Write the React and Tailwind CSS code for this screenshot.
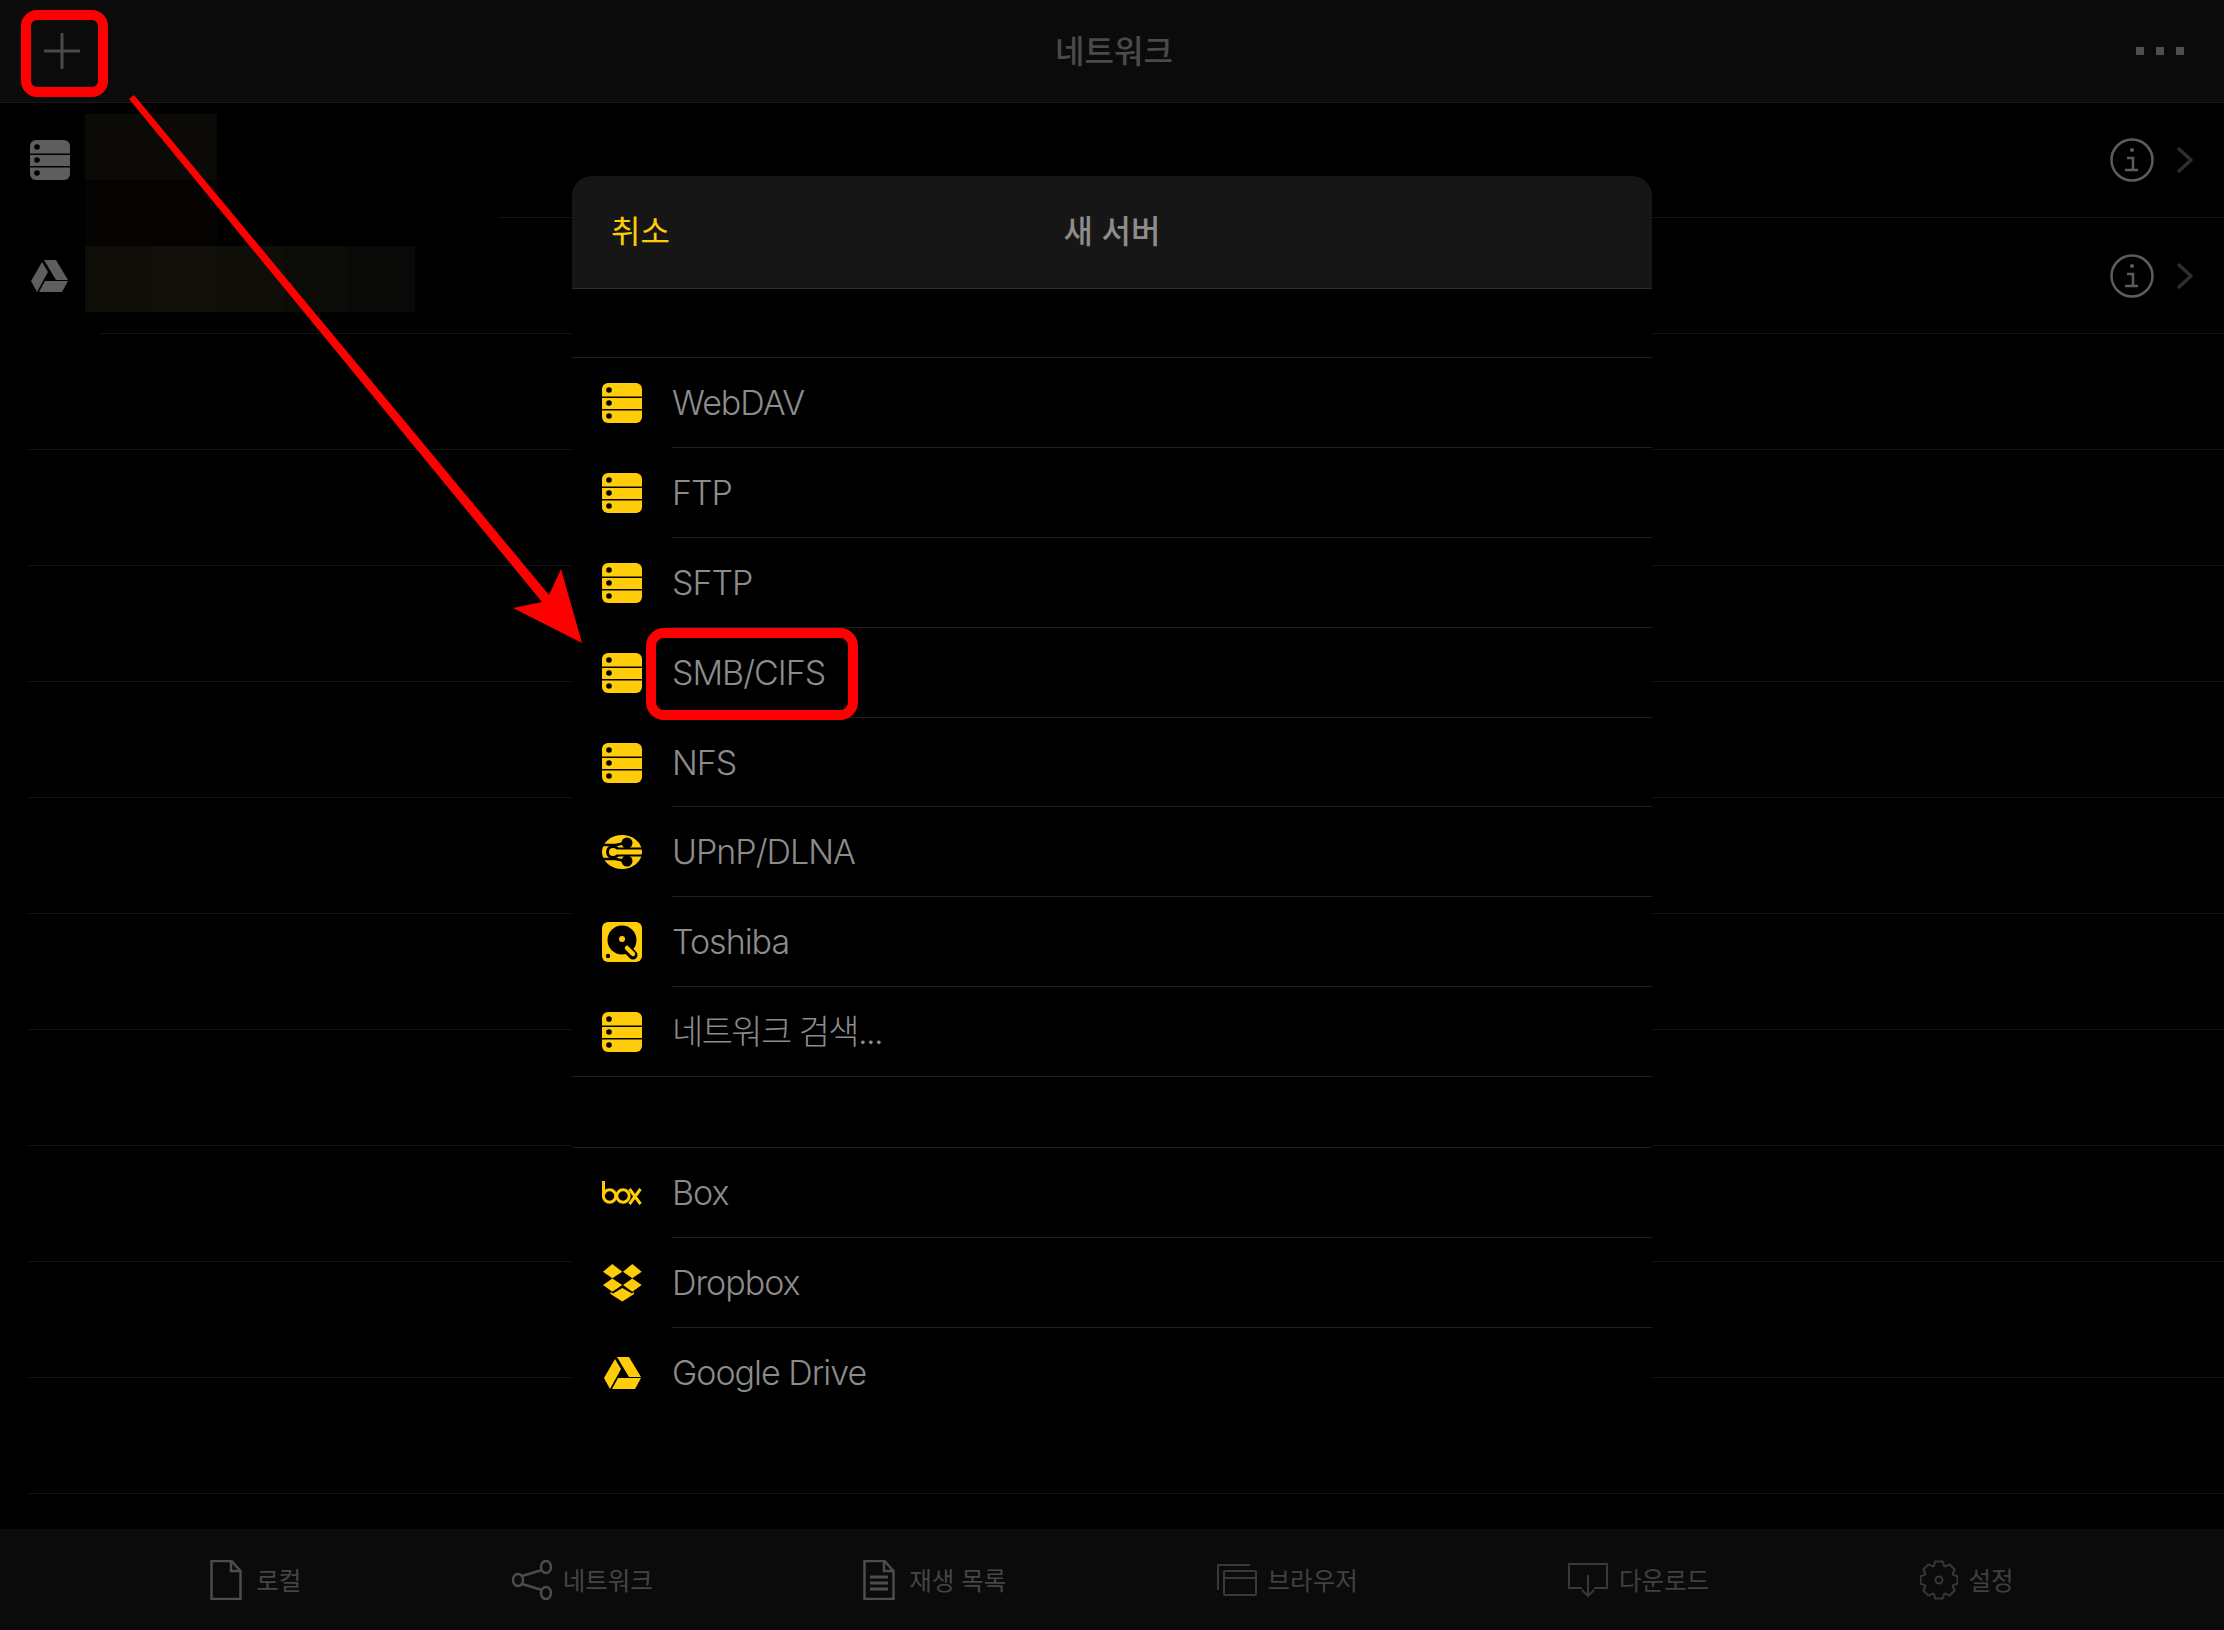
const Server = ({ c = "#ffcc0a" }) => (
  <svg width="40" height="40" viewBox="0 0 40 40">
    <path d="M6 0h28a6 6 0 0 1 6 6v7.500H0V6a6 6 0 0 1 6-6z" fill={c} />
    <rect y="15" width="40" height="11" fill={c} />
    <path d="M0 27.500h40V34a6 6 0 0 1-6 6H6a6 6 0 0 1-6-6z" fill={c} />
    <circle cx="7" cy="7" r="2.800" fill="#000" />
    <circle cx="7" cy="20" r="2.800" fill="#000" />
    <circle cx="7" cy="33" r="2.800" fill="#000" />
  </svg>
);
const Upnp = () => (
  <svg width="40" height="34" viewBox="0 0 40 34">
    <ellipse cx="20" cy="17" rx="20" ry="17" fill="#ffcc0a" />
    <path d="M1 10H13C17 10 18 8 25 8" stroke="#000" strokeWidth="2.500" fill="none" />
    <path d="M1 24H13C17 24 18 26 25 26" stroke="#000" strokeWidth="2.500" fill="none" />
    <circle cx="25" cy="8" r="5.500" fill="#000" />
    <circle cx="25" cy="26" r="5.500" fill="#000" />
    <path d="M14 13.500H40M14 20.500H40" stroke="#000" strokeWidth="2" fill="none" />
    <circle cx="11" cy="17" r="5.500" fill="#ffcc0a" stroke="#000" strokeWidth="3" />
    <rect x="12" y="14.500" width="6" height="5" fill="#ffcc0a" />
  </svg>
);
const Hdd = () => (
  <svg width="40" height="40" viewBox="0 0 40 40">
    <rect width="40" height="40" rx="6" fill="#ffcc0a" />
    <circle cx="20" cy="18" r="14.500" fill="#000" />
    <circle cx="20" cy="17" r="3" fill="#ffcc0a" />
    <path d="M24 26l7 7" stroke="#000" strokeWidth="9" strokeLinecap="round" />
    <path d="M25 26l6 6" stroke="#ffcc0a" strokeWidth="4.500" strokeLinecap="round" />
    <circle cx="6" cy="34" r="2.200" fill="#000" />
  </svg>
);
const BoxLogo = () => (
  <svg width="40" height="24" viewBox="0 0 40 24" fill="none" stroke="#ffcc0a" strokeWidth="3">
    <path d="M1.500 0v15" />
    <circle cx="7.600" cy="15" r="6.200" />
    <circle cx="21" cy="15" r="6.200" />
    <path d="M27.500 8l11 15M38.500 8l-11 15" />
  </svg>
);
const Dropbox = () => (
  <svg width="39" height="38" viewBox="0 0 39 38" fill="#ffcc0a">
    <path d="M0 7.700L9.300 0l10 7.700-10 6.600z" />
    <path d="M20 7.700L29.300 0l9.400 7.700-9.400 6.600z" />
    <path d="M0 21l9.300-6.500 10 6.500-10 6.700z" />
    <path d="M20 21l9.300-6.500 9.400 6.500-9.400 6.700z" />
    <path d="M7.500 28l2.500 1.500 9.300-5.500L29 29.500l2-1.500v2l-11.700 7.500L7.500 30z" />
  </svg>
);
const Drive = ({ c = "#ffcc0a", w = 37, h = 32 }) => (
  <svg width={w} height={h} viewBox="0 0 37 32" fill={c}>
    <path d="M13 0h12l12 20H25z" />
    <path d="M11 2l6 10L6 32 0 21z" />
    <path d="M14 21h23l-6 11H8z" />
  </svg>
);
const Plain = ({ children, w = 40, h = 40, s = "#4c4c4c", sw = 2 }) => (
  <svg width={w} height={h} viewBox={`0 0 ${w} ${h}`} fill="none" stroke={s} strokeWidth={sw}>
    {children}
  </svg>
);
const gearPath = () => {
  const pts = [];
  const n = 8;
  for (let i = 0; i < n; i++) {
    const a = (i * 2 * Math.PI) / n - Math.PI / 2;
    const seg = (2 * Math.PI) / n;
    [[15, -0.5], [18.8, -0.27], [18.8, 0.27], [15, 0.5]].forEach(([r, k]) => {
      const t = a + k * seg * 0.9;
      pts.push(`${(19 + r * Math.cos(t)).toFixed(1)} ${(20 + r * Math.sin(t)).toFixed(1)}`);
    });
  }
  return "M" + pts.join("L") + "z";
};
const Info = () => (
  <svg width="44" height="44" viewBox="0 0 44 44" fill="none" stroke="#5c5c5c" strokeWidth="2.500">
    <circle cx="22" cy="22" r="20.500" />
    <circle cx="22" cy="12" r="2" fill="#5c5c5c" stroke="none" />
    <path d="M17 20h6v12M15 32h13" />
  </svg>
);
const Chevron = () => (
  <svg width="16" height="26" viewBox="0 0 16 26" fill="none" stroke="#2e2e2e" strokeWidth="3.500" strokeLinecap="round" strokeLinejoin="round">
    <path d="M2 2l12 11L2 24" />
  </svg>
);

const group1 = [
  ["WebDAV", <Server />],
  ["FTP", <Server />],
  ["SFTP", <Server />],
  ["SMB/CIFS", <Server />],
  ["NFS", <Server />],
  ["UPnP/DLNA", <Upnp />],
  ["Toshiba", <Hdd />],
  ["네트워크 검색...", <Server />, "tracking-[-1.6px]"],
];
const group2 = [
  ["Box", <BoxLogo />],
  ["Dropbox", <Dropbox />],
  ["Google Drive", <Drive />],
];

const Row = ({ label, icon, last, track = "tracking-[-1px]" }) => (
  <div className="flex h-[89.9px] items-stretch">
    <div className="flex w-[100px] shrink-0 items-center justify-center">{icon}</div>
    <div className={`flex flex-1 items-center text-[34px] font-light text-[#8c8c8c] ${track} ${last ? "" : "border-b border-[#1e1e1e]"}`}>
      {label}
    </div>
  </div>
);

const tabs = [
  ["로컬", "#454545", "gap-[14px]", <Plain w={32} h={40} sw={2.5}><path d="M1.500 1h20l9 10v28h-29zM21 1v10h9.500" /></Plain>],
  ["네트워크", "#454545", "gap-[11px]", <Plain w={40} h={40} sw={2.5}><ellipse cx="6" cy="20" rx="5" ry="6" /><ellipse cx="34" cy="7" rx="5" ry="6" /><ellipse cx="34" cy="33" rx="5" ry="6" /><path d="M10 16l20-6M10 24l20 6" /></Plain>],
  ["재생 목록", "#454545", "gap-[14px]", <Plain w={32} h={40} sw={2.5}><path d="M1.500 1h20l9 10v28h-29zM21 1v10h9.500" /><path d="M7 17h18M7 23h18M7 29h18" strokeWidth="3" /></Plain>],
  ["브라우저", "#404040", "gap-[11px]", <Plain w={40} h={32} s="#383838"><path d="M1 26V1h32" /><rect x="7" y="7" width="32" height="24" rx="1" /><path d="M7 14h32" /></Plain>],
  ["다운로드", "#404040", "gap-[11px]", <Plain w={40} h={34} s="#383838"><path d="M14 25H1V1h38v24H26" /><path d="M20 12v21M14 27l6 6 6-6" /></Plain>],
  ["설정", "#404040", "gap-[11px]", <Plain w={38} h={40} s="#383838"><path d={gearPath()} /><circle cx="19" cy="20" r="3.500" /></Plain>],
];

export default function App() {
  return (
    <div className="relative flex h-[1630px] w-[2224px] flex-col overflow-hidden bg-black font-['Inter','Noto_Sans_CJK_KR',sans-serif]">
      <header className="flex h-[103px] shrink-0 items-center border-b border-[#191919] bg-[#0b0b0b] pl-[44px] pr-[40px]">
        <div className="flex w-[100px] items-center">
          <svg width="36" height="36" viewBox="0 0 36 36" stroke="#4a4a4a" strokeWidth="3" strokeLinecap="round"><path d="M18 1v34M1 18h34" /></svg>
        </div>
        <div className="flex-1 pt-[2px] text-center text-[32px] font-medium text-[#4a4a4a]">네트워크</div>
        <div className="flex w-[100px] justify-end gap-[12px]">
          <span className="h-[8px] w-[8px] bg-[#4f4f4f]" />
          <span className="h-[8px] w-[8px] bg-[#4f4f4f]" />
          <span className="h-[8px] w-[8px] bg-[#4f4f4f]" />
        </div>
      </header>

      <main className="flex flex-1 flex-col">
        <div className="flex h-[115px] shrink-0 items-center border-b border-[#141414] pl-[30px] pr-[31px] [border-image:linear-gradient(to_right,transparent_500px,#141414_500px)_1]">
          <Server c="#5e5e5e" />
          <div className="ml-[15px] flex h-[132px] w-[132px] flex-col self-start pt-[11px]">
            <div className="h-[66px] w-[132px] shrink-0 bg-[#0b0a06]" />
            <div className="h-[66px] w-[132px] shrink-0 bg-[#050402]" />
          </div>
          <div className="ml-auto flex items-center gap-[23px]"><Info /><Chevron /></div>
        </div>
        <div className="flex h-[115px] shrink-0 items-center pl-[31px] pr-[31px]">
          <Drive c="#5e5e5e" />
          <div className="ml-[17px] flex self-start pt-[28px]">
            <div className="h-[66px] w-[66px] bg-[#0e0d08]" />
            <div className="h-[66px] w-[66px] bg-[#100f0a]" />
            <div className="h-[66px] w-[66px] bg-[#0f0e09]" />
            <div className="h-[66px] w-[66px] bg-[#0b0b08]" />
            <div className="h-[66px] w-[66px] bg-[#090908]" />
          </div>
          <div className="ml-auto flex items-center gap-[23px]"><Info /><Chevron /></div>
        </div>
        <div className="ml-[100px] h-px shrink-0 bg-[#141414]" />
        {Array.from({ length: 10 }).map((_, i) => (
          <div key={i} className="ml-[28px] h-[116px] shrink-0 border-b border-[#141414]" />
        ))}
      </main>

      <footer className="flex h-[101px] shrink-0 items-center justify-evenly bg-[#0b0b0b]">
        {tabs.map(([t, col, gap, ic]) => (
          <div key={t} className={`flex items-center text-[24.5px] ${gap}`} style={{ color: col }}>
            {ic}
            <span className="pt-[3px]">{t}</span>
          </div>
        ))}
      </footer>

      <section className="absolute left-[572px] top-[176px] flex h-[1244px] w-[1080px] flex-col overflow-hidden rounded-t-[20px] bg-black">
        <div className="relative flex h-[113px] shrink-0 items-center justify-center border-b border-[#2c2c2c] bg-[#161616]">
          <span className="absolute left-[39px] text-[32px] text-[#ffcc0a]">취소</span>
          <span className="text-[32px] font-medium text-[#8c8c8c]">새 서버</span>
        </div>
        <div className="h-[69px] shrink-0 border-b border-[#1e1e1e]" />
        {group1.map(([l, ic, tr]) => <Row key={l} label={l} icon={ic} track={tr} />)}
        <div className="-mt-px h-[72px] shrink-0 border-y border-[#1e1e1e]" />
        {group2.map(([l, ic], i) => <Row key={l} label={l} icon={ic} last={i === 2} />)}
      </section>

      <div className="absolute left-[21px] top-[10px] h-[87px] w-[87px] rounded-[16px] border-[10px] border-[#ff0000]" />
      <div className="absolute left-[646px] top-[628px] h-[92px] w-[212px] rounded-[18px] border-[10px] border-[#ff0000]" />
      <svg className="absolute left-0 top-0" width="2224" height="1630" viewBox="0 0 2224 1630">
        <path d="M129 99L134 95L549 595L561 569L582 643L513 608L542 602z" fill="#ff0000" />
      </svg>
    </div>
  );
}
